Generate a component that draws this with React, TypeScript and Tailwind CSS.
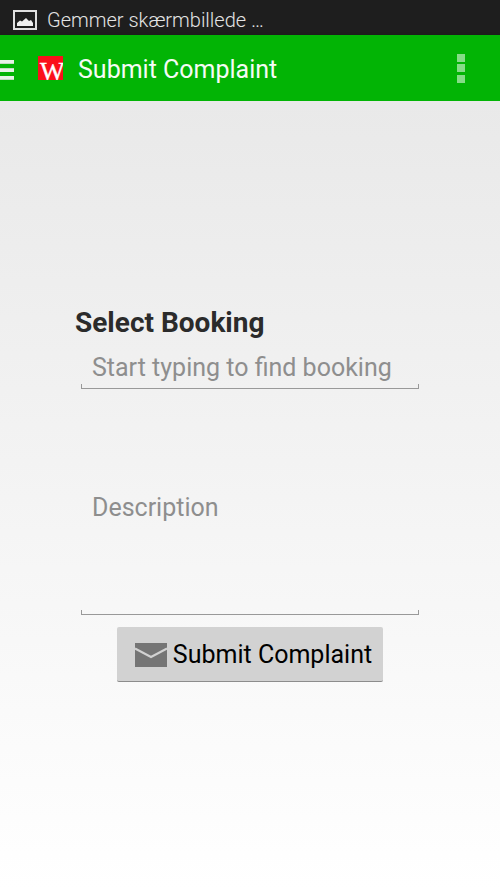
import { useState, type FormEvent } from 'react';

function PictureIcon() {
  return (
    <svg width="24" height="20" viewBox="0 0 24 20" fill="none" aria-hidden="true">
      <rect x="1" y="1" width="22" height="18" stroke="#e0e0e0" strokeWidth="2" />
      <path d="M4 16v-3l3-2.500 2 1 4-3.500 3 3 2-1 2 3V16z" fill="#f0f0f0" />
    </svg>
  );
}

function MenuIcon() {
  return (
    <svg width="14" height="21" viewBox="0 0 14 21" aria-hidden="true">
      <path d="M0 0h14v4H0zM0 8h14v4H0zM0 16h14v4H0z" fill="#e6f3e6" />
      <path d="M0 3h14v1H0zM0 8h14v1H0zM0 19h14v1H0z" fill="#c0dcc0" />
    </svg>
  );
}

function Logo() {
  return (
    <svg width="25" height="24" viewBox="0 0 25 24" aria-hidden="true">
      <path d="M0 0h25v24H0z" fill="#fb0f1b" />
      <text x="2" y="24" fill="#fff" stroke="#fff" strokeWidth="0.400" className="font-['Liberation_Serif',serif] text-[26px]">
        W
      </text>
    </svg>
  );
}

function OverflowIcon() {
  return (
    <svg width="8" height="29" viewBox="0 0 8 29" fill="#86dc88" aria-hidden="true">
      <path d="M0 0h8v8H0zM0 10h8v8H0zM0 21h8v8H0z" />
    </svg>
  );
}

function MailIcon() {
  return (
    <svg width="32" height="24" viewBox="0 0 32 24" aria-hidden="true">
      <path d="M0 0h32v24H0z" fill="#757575" />
      <path d="M0 5.500l16 8.500 16-8.500" fill="none" stroke="#d2d2d2" strokeWidth="2" />
    </svg>
  );
}

// Holo style underline with the short upright ends
function Underline() {
  return <div className="h-[5px] border-x border-b border-[#999999]" />;
}

function StatusBar() {
  return (
    <div className="flex h-[35px] items-center gap-2.5 bg-[#1e1e1e] px-[13px] pt-1">
      <PictureIcon />
      <span className="text-[20px] leading-6 font-light text-[#e4e4e4]">Gemmer skærmbillede …</span>
    </div>
  );
}

function ActionBar() {
  return (
    <header className="flex h-[66px] items-center bg-[#02b405] pr-[35px] shadow-[0_1px_3px_rgba(0,0,0,0.35)]">
      <button type="button" aria-label="Menu" className="pt-1">
        <MenuIcon />
      </button>
      <div className="ml-6">
        <Logo />
      </div>
      <h1 className="ml-[15px] flex-1 pt-1 text-[25px] leading-8 text-[#f5fbf5]">Submit Complaint</h1>
      <button type="button" aria-label="More options">
        <OverflowIcon />
      </button>
    </header>
  );
}

export default function App() {
  const [booking, setBooking] = useState('');
  const [description, setDescription] = useState('');

  function submit(e: FormEvent) {
    e.preventDefault();
    setBooking('');
    setDescription('');
  }

  return (
    <div className="flex min-h-screen flex-col bg-white font-[Roboto,sans-serif]">
      <StatusBar />
      <ActionBar />
      <main className="flex flex-1 flex-col justify-center bg-linear-to-b from-[#e9e9e9] to-white px-[15%] pb-1">
        <form onSubmit={submit} className="flex flex-col">
          <label htmlFor="booking" className="pt-px text-[28px] leading-9 font-bold text-[#2b2b2b]">
            Select Booking
          </label>
          <div className="mx-1.5 mt-[11px]">
            <input
              id="booking"
              value={booking}
              onChange={(e) => setBooking(e.target.value)}
              placeholder="Start typing to find booking"
              className="block h-8 w-full px-[11px] text-[25px] leading-8 text-black outline-none placeholder:text-[#8e8e8e]"
            />
            <Underline />
          </div>
          <div className="mx-1.5 mt-[103px]">
            <textarea
              aria-label="Description"
              value={description}
              onChange={(e) => setDescription(e.target.value)}
              placeholder="Description"
              className="block h-[118px] w-full resize-none px-[11px] text-[25px] leading-8 text-black outline-none placeholder:text-[#8e8e8e]"
            />
            <Underline />
          </div>
          <button
            type="submit"
            className="mt-3 flex h-[55px] items-center gap-1.5 self-center rounded-xs border-b border-[#8c8c8c] bg-[#d2d2d2] pt-0.5 pr-[11px] pl-[18px] text-[25px] leading-8 whitespace-nowrap text-black"
          >
            <MailIcon />
            Submit Complaint
          </button>
        </form>
      </main>
    </div>
  );
}
